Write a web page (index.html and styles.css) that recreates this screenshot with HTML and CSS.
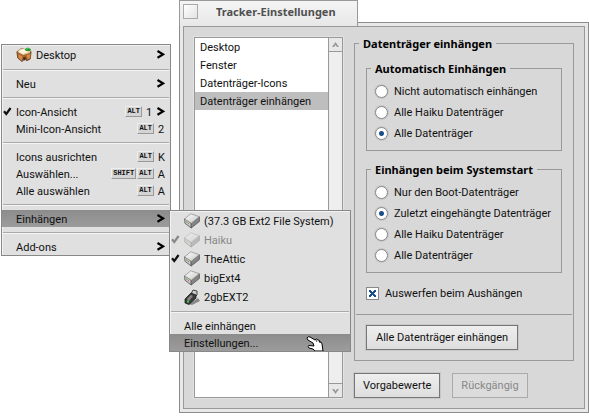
FILE: index.html
```
<!DOCTYPE html>
<html lang="de">
<head>
<meta charset="utf-8">
<title>Tracker-Einstellungen</title>
<link rel="stylesheet" href="styles.css">
</head>
<body>
<svg class="defs" aria-hidden="true">
  <defs>
    <linearGradient id="metal" x1="0" y1="0" x2="1" y2="1">
      <stop offset="0" stop-color="#fff"/><stop offset="1" stop-color="#c4c4c4"/>
    </linearGradient>
    <symbol id="disk" viewBox="0 0 16 16">
      <path d="M.6 5.800 7.200 10.200V15L.9 10.200Z" fill="#c8c8c8" stroke="#555" stroke-width=".8"/>
      <path d="M7.200 10.200 15.400 3.900V8.500L7.200 15Z" fill="#858585" stroke="#555" stroke-width=".8"/>
      <path d="M.6 5.900 6.800.8 15.300 3.700 7.300 10.200Z" fill="url(#metal)" stroke="#888" stroke-width=".7"/>
      <path d="M2 8.700l1.500 1" stroke="#7b5" stroke-width="1.200"/><path d="M4 10.200l1 .7" stroke="#d65" stroke-width="1"/>
    </symbol>
    <symbol id="check" viewBox="0 0 9 9"><path d="M1 4.200 3.300 7 7.600 1" fill="none" stroke="currentColor" stroke-width="2.200"/></symbol>
    <symbol id="chevron" viewBox="0 0 8 9"><path d="M.5 1 6 4.400.5 7.800" fill="none" stroke="currentColor" stroke-width="2.200"/></symbol>
  </defs>
</svg>

<main class="window">
  <header class="tab">
    <button class="close" aria-label="Schließen"></button>
    <h1>Tracker-Einstellungen</h1>
  </header>
  <div class="frame">
    <div class="panel">
      <div class="listbox">
        <ul class="list">
          <li>Desktop</li>
          <li>Fenster</li>
          <li>Datenträger-Icons</li>
          <li class="selected">Datenträger einhängen</li>
        </ul>
        <div class="scrollbar">
          <button aria-label="Nach oben"><svg viewBox="0 0 7 6"><path d="M0 5 3.500 0 7 5 5 5 3.500 3 2 5Z"/></svg></button>
          <button aria-label="Nach unten"><svg viewBox="0 0 7 6"><path d="M0 1 3.500 6 7 1 5 1 3.500 3 2 1Z"/></svg></button>
        </div>
      </div>
      <form class="settings">
        <fieldset class="outer">
          <legend>Datenträger einhängen</legend>
          <fieldset class="group">
            <legend>Automatisch Einhängen</legend>
            <label><input type="radio" name="auto">Nicht automatisch einhängen</label>
            <label><input type="radio" name="auto">Alle Haiku Datenträger</label>
            <label><input type="radio" name="auto" checked>Alle Datenträger</label>
          </fieldset>
          <fieldset class="group">
            <legend>Einhängen beim Systemstart</legend>
            <label><input type="radio" name="boot">Nur den Boot-Datenträger</label>
            <label><input type="radio" name="boot" checked>Zuletzt eingehängte Datenträger</label>
            <label><input type="radio" name="boot">Alle Haiku Datenträger</label>
            <label><input type="radio" name="boot">Alle Datenträger</label>
          </fieldset>
          <label class="eject"><input type="checkbox" checked>Auswerfen beim Aushängen</label>
          <hr>
          <button type="button" class="push">Alle Datenträger einhängen</button>
        </fieldset>
        <div class="actions">
          <button type="button" class="push">Vorgabewerte</button>
          <button type="button" class="push" disabled>Rückgängig</button>
        </div>
      </form>
    </div>
  </div>
</main>

<nav class="menu context">
  <button class="item tall">
    <svg class="icon" viewBox="0 0 18 17">
      <path d="M1 5 2 12 7 16 7.500 12.500 9 11 11 11 12 15 16 13 17 5Z" fill="#b5672c" stroke="#4a2a10" stroke-width=".8"/>
      <path d="M3 8 7 10 7 15 3 12ZM12 9 16 7V12L13 13Z" fill="#d68b45"/>
      <path d="M8 11h3v3l-3 1Z" fill="#4a2a14"/>
      <path d="M1 5 6 1 17 4 15 7 8 9Z" fill="#e9c390" stroke="#80502a" stroke-width=".7"/>
      <path d="M4 3 9 1.500 14 5 8 7.500 3 5Z" fill="#fff4df"/>
      <path d="M10 2 13 0 17 2 15 4 11 4Z" fill="#169b28"/><path d="M12 2l2-1" stroke="#7be06c"/>
    </svg>
    <span class="name">Desktop</span><svg class="chevron"><use href="#chevron"/></svg>
  </button>
  <hr>
  <button class="item"><span class="name">Neu</span><svg class="chevron"><use href="#chevron"/></svg></button>
  <hr>
  <button class="item"><svg class="check"><use href="#check"/></svg><span class="name">Icon-Ansicht</span><kbd>ALT</kbd><span class="key">1</span><svg class="chevron"><use href="#chevron"/></svg></button>
  <button class="item"><span class="name">Mini-Icon-Ansicht</span><kbd>ALT</kbd><span class="key">2</span></button>
  <hr>
  <button class="item"><span class="name">Icons ausrichten</span><kbd>ALT</kbd><span class="key">K</span></button>
  <button class="item"><span class="name">Auswählen...</span><kbd>SHIFT</kbd><kbd>ALT</kbd><span class="key">A</span></button>
  <button class="item"><span class="name">Alle auswählen</span><kbd>ALT</kbd><span class="key">A</span></button>
  <hr>
  <button class="item active"><span class="name">Einhängen</span><svg class="chevron"><use href="#chevron"/></svg></button>
  <hr>
  <button class="item"><span class="name">Add-ons</span><svg class="chevron"><use href="#chevron"/></svg></button>
</nav>

<nav class="menu volumes">
  <button class="item tall"><svg class="icon"><use href="#disk"/></svg><span class="name">(37.3 GB Ext2 File System)</span></button>
  <button class="item tall" disabled><svg class="check"><use href="#check"/></svg><svg class="icon"><use href="#disk"/></svg><span class="name">Haiku</span></button>
  <button class="item tall"><svg class="check"><use href="#check"/></svg><svg class="icon"><use href="#disk"/></svg><span class="name">TheAttic</span></button>
  <button class="item tall"><svg class="icon"><use href="#disk"/></svg><span class="name">bigExt4</span></button>
  <button class="item tall">
    <svg class="icon" viewBox="0 0 16 16">
      <path d="M5 15 14 9 16 12 8 16Z" fill="#888"/>
      <path d="M7 5 9 1 13 2 13 6 11 8Z" fill="#ccc" stroke="#444"/>
      <path d="M1 10 7 4 12 6 12 9 5 15.500 1 14Z" fill="#3c3c3c" stroke="#1c1c1c" stroke-width=".8"/>
      <path d="M3 10 7 6 9 7 5 12Z" fill="#888"/>
      <path d="M3 12.500h2" stroke="#35d84a" stroke-width="2"/>
    </svg>
    <span class="name">2gbEXT2</span>
  </button>
  <hr>
  <button class="item"><span class="name">Alle einhängen</span></button>
  <button class="item active"><span class="name">Einstellungen...</span></button>
  <svg class="pointer" viewBox="0 0 18 15">
    <path d="M1 2Q2 0 4 1L9 4Q10 2 12 4Q14 4 14 6Q16 6 16 8L17 15H9L7 13 3 12Q1 10 3 9.500L8 10 7 7 2 4Q1 3 1 2Z" fill="#fff" stroke="#000" stroke-width="1"/>
    <path d="M10 4l1 2M13 5l1 2" stroke="#000" stroke-width=".7"/>
  </svg>
</nav>
</body>
</html>
```
FILE: styles.css
```
* { box-sizing: border-box; }

body {
  margin: 0;
  background: #fff;
  color: #111;
  font: 11px/17px Roboto, "Noto Sans", sans-serif;
}

button { font: inherit; color: inherit; margin: 0; }
.defs { position: absolute; width: 0; height: 0; }

/* Settings window */
.window { margin-left: 179px; }

.tab {
  position: relative;
  display: flex;
  align-items: center;
  gap: 18px;
  width: 179px;
  height: 26px;
  margin-bottom: -4px;
  padding: 0 3px 4px;
  background: linear-gradient(#f4f4f4, #e8e8e8);
  border: 1px solid #999;
  border-bottom: 0;
}

.tab h1 {
  margin: 0;
  font: bold 11px/18px "Noto Sans", sans-serif;
  color: #505050;
  white-space: nowrap;
}

.close {
  width: 15px;
  height: 15px;
  padding: 0;
  background: linear-gradient(135deg, #fff, #e2e2e2);
  border: 1px solid #aaa;
}

.frame {
  padding: 3px;
  background: #e8e8e8;
  border: 1px solid #8c8c8c;
}

.panel {
  display: grid;
  grid-template-columns: 149px minmax(0, 1fr);
  gap: 11px;
  padding: 10px;
  background: #d8d8d8;
  border: 1px solid #999;
}

.listbox {
  display: flex;
  background: #fff;
  border: 1px solid #999;
  box-shadow: 0 0 0 1px #e2e2e2;
}

.list { flex: 1; margin: 0; padding: 0; list-style: none; }
.list li { padding: 1px 0 0 5px; white-space: nowrap; }
.list .selected { background: #bebebe; }

.scrollbar {
  display: flex;
  flex-direction: column;
  justify-content: space-between;
  width: 14px;
  background: #eee;
  border-left: 1px solid #999;
}

.scrollbar button {
  display: grid;
  place-items: center;
  height: 14px;
  padding: 0;
  background: #e8e8e8;
  border: 0 solid #999;
}

.scrollbar button:first-child { border-bottom-width: 1px; }
.scrollbar button:last-child { border-top-width: 1px; }
.scrollbar svg { width: 7px; height: 6px; fill: #999; }

fieldset {
  min-width: 0;
  margin: 0;
  border: 1px solid #999;
}

legend {
  padding: 0 4px;
  font: bold 11px/13px "Noto Sans", sans-serif;
  color: #000;
}

.outer { padding: 12px 11px 10px; }
.outer > legend { margin-left: -7px; }
.group { padding: 6px 8px; }
.group > legend { margin-left: -4px; }
.group + .group { margin-top: 12px; }

label {
  display: flex;
  align-items: center;
  gap: 6px;
  height: 21px;
  white-space: nowrap;
}

input { flex: none; appearance: none; width: 13px; height: 13px; margin: 0; border: 1px solid #888; background: #fff; }
input[type="radio"] { border-radius: 50%; box-shadow: 0 0 0 1px #c8c8c8; }
input[type="radio"]:checked { background: radial-gradient(circle, #1a4f8c 2px, #fff 3px); }
input[type="checkbox"]:checked {
  background:
    linear-gradient(45deg, transparent 41%, #1a4f8c 41% 59%, transparent 59%) center / 7px 7px no-repeat,
    linear-gradient(-45deg, transparent 41%, #1a4f8c 41% 59%, transparent 59%) center / 7px 7px no-repeat,
    #fff;
}

.eject { margin-top: 10px; }

.outer > hr {
  margin: 10px -10px;
  border: 0;
  border-top: 1px solid #999;
}

.push {
  height: 25px;
  padding: 0 8px;
  background: linear-gradient(#eee, #dedede);
  border: 1px solid #777;
  box-shadow: 0 0 0 1px #c8c8c8;
  white-space: nowrap;
}

.push:disabled { color: #888; background: #dcdcdc; border-color: #aaa; box-shadow: none; }
.outer > .push { display: block; padding: 0 9px; }
.actions { display: flex; gap: 12px; margin-top: 12px; }

/* Menus */
.menu {
  position: absolute;
  display: flex;
  flex-direction: column;
  background: #e0e0e0;
  border: 1px solid #888;
  box-shadow: inset 1px 1px #f2f2f2;
}

.context { left: 1px; top: 44px; width: 170px; }
.volumes { left: 169px; top: 210px; width: 182px; }

.menu hr {
  width: calc(100% - 2px);
  margin: 5px 1px 4px;
  border: 0;
  border-top: 1px solid #aaa;
  border-bottom: 1px solid #f4f4f4;
}

.item {
  position: relative;
  display: flex;
  align-items: center;
  height: 17px;
  padding: 0 5px 0 14px;
  background: none;
  border: 0;
  text-align: left;
  white-space: nowrap;
}

.tall { height: 19px; }
.item.active { background: linear-gradient(#8c8c8c, #9c9c9c); }
.item:disabled { color: #888; }
.item:disabled .icon { opacity: .4; }
.name { flex: 1; padding-top: 2px; }
.icon { width: 16px; height: 16px; margin-right: 4px; }
.check { position: absolute; left: 1px; width: 9px; height: 9px; }
.chevron { width: 8px; height: 9px; color: #000; }
.key { min-width: 7px; margin-left: 4px; padding-top: 2px; }
.key + .chevron { margin-left: 4px; }

kbd {
  height: 11px;
  padding: 0 1px;
  margin-left: 1px;
  background: #d4d4d4;
  border: 1px solid;
  border-color: #eee #999 #999 #eee;
  font: bold 7px/9px "Liberation Mono", monospace;
}

.pointer { position: absolute; left: 136px; bottom: 0; width: 18px; height: 15px; }
```
